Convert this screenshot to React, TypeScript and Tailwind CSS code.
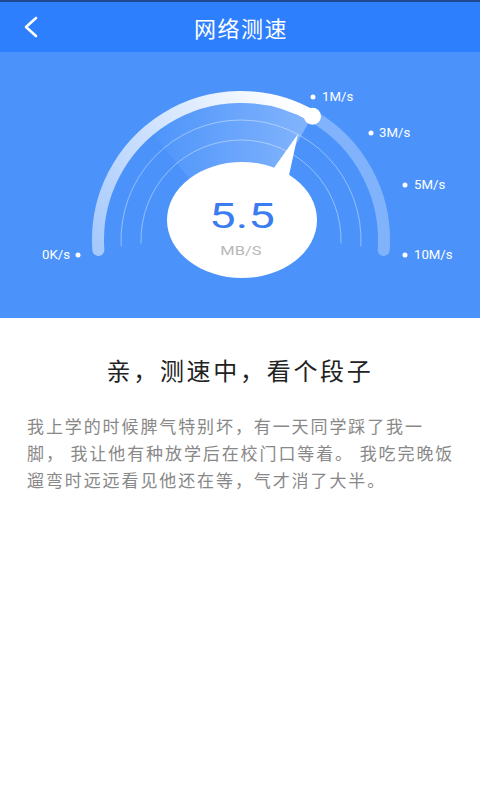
import React from 'react';

const CX = 241;
const CY = 188;

function pt(deg: number, r: number) {
  const a = (deg * Math.PI) / 180;
  return [CX + r * Math.cos(a), CY - r * Math.sin(a)];
}

function arc(from: number, to: number, r: number) {
  const [x1, y1] = pt(from, r);
  const [x2, y2] = pt(to, r);
  const large = from - to > 180 ? 1 : 0;
  return `M ${x1} ${y1} A ${r} ${r} 0 ${large} 1 ${x2} ${y2}`;
}

const KNOB = 60;

const labels = [
  { text: '1M/s', dot: [313, 45], x: 322, y: 49, anchor: 'start' },
  { text: '3M/s', dot: [371, 81], x: 379, y: 85, anchor: 'start' },
  { text: '5M/s', dot: [405, 133], x: 414, y: 137, anchor: 'start' },
  { text: '10M/s', dot: [405, 203], x: 414, y: 207, anchor: 'start' },
  { text: '0K/s', dot: [78, 203], x: 70, y: 207, anchor: 'end' },
];

function Gauge() {
  const [kx, ky] = pt(KNOB, 143);
  const [sx1, sy1] = pt(130, 137);
  const [sx2, sy2] = pt(KNOB, 137);

  return (
    <svg width="480" height="266" viewBox="0 0 480 266" className="block">
      <defs>
        <linearGradient id="fan" gradientUnits="userSpaceOnUse" x1="145" y1="0" x2="305" y2="0">
          <stop offset="0" stopColor="#fff" stopOpacity="0" />
          <stop offset="1" stopColor="#fff" stopOpacity="0.3" />
        </linearGradient>
        <linearGradient id="done" gradientUnits="userSpaceOnUse" x1="98" y1="200" x2="300" y2="60">
          <stop offset="0" stopColor="#fff" stopOpacity="0.5" />
          <stop offset="1" stopColor="#fff" stopOpacity="1" />
        </linearGradient>
      </defs>

      {/* progress fan */}
      <path d={`M ${CX} ${CY} L ${sx1} ${sy1} A 137 137 0 0 1 ${sx2} ${sy2} Z`} fill="url(#fan)" />

      {/* inner rings */}
      <path d={arc(183, -3, 120)} fill="none" stroke="#fff" strokeOpacity="0.4" strokeWidth="1" />
      <path d={arc(182, -2, 100)} fill="none" stroke="#fff" strokeOpacity="0.4" strokeWidth="1" />

      {/* outer track */}
      <path d={arc(KNOB, -4, 143)} fill="none" stroke="#fff" strokeOpacity="0.3" strokeWidth="12" strokeLinecap="round" />
      <path d={arc(184, KNOB, 143)} fill="none" stroke="url(#done)" strokeWidth="12" strokeLinecap="round" />
      <circle cx={kx} cy={ky} r="8.5" fill="#fff" />

      {/* bubble with tail */}
      <polygon points="264,130 298,82 288,128" fill="#fff" />
      <ellipse cx="242" cy="168" rx="75" ry="58" fill="#fff" />
      <text
        transform="translate(242 175.5) scale(1.32 1)"
        textAnchor="middle"
        fontSize="36"
        fill="#3b7df0"
        fontFamily="Roboto, 'Liberation Sans', sans-serif"
      >
        5.5
      </text>
      <text
        transform="translate(241 203) scale(1.32 1)"
        textAnchor="middle"
        fontSize="12.5"
        fill="#b8b8b8"
        fontFamily="Roboto, 'Liberation Sans', sans-serif"
      >
        MB/S
      </text>

      {labels.map((l) => (
        <g key={l.text}>
          <circle cx={l.dot[0]} cy={l.dot[1]} r="2.5" fill="#fff" />
          <text
            transform={`translate(${l.x} ${l.y}) scale(1.1 1)`}
            textAnchor={l.anchor as 'start' | 'end'}
            fontSize="12"
            fill="#fff"
            fontFamily="Roboto, 'Liberation Sans', sans-serif"
          >
            {l.text}
          </text>
        </g>
      ))}
    </svg>
  );
}

export default function App() {
  return (
    <div className="w-[480px] h-[800px] bg-white overflow-hidden font-['Noto_Sans_CJK_SC','Noto_Sans',sans-serif]">
      <div className="h-[2px] bg-[#1d4a8f]" />
      <header className="relative h-[50px] bg-[#2d7ffe] flex items-center justify-center">
        <button className="absolute left-[18px] top-1/2 -translate-y-1/2 p-1 text-white">
          <svg width="18" height="22" viewBox="0 0 18 22">
            <path d="M14 2 L4 11 L14 20" fill="none" stroke="#fff" strokeWidth="2.6" strokeLinecap="round" strokeLinejoin="round" />
          </svg>
        </button>
        <h1 className="text-white text-[22px] tracking-[1.5px] pl-[2px]">网络测速</h1>
      </header>

      <section className="h-[266px] bg-[#4b93fb]">
        <Gauge />
      </section>

      <div className="pt-[36px] text-center text-[24px] tracking-[2.7px] text-[#222222] leading-[32px]">
        亲，测速中，看个段子
      </div>

      <div className="mt-[26px] pl-[27px] text-[17px] leading-[27px] tracking-[1.9px] text-[#888888] whitespace-pre">
        <p>我上学的时候脾气特别坏，有一天同学踩了我一</p>
        <p>脚， 我让他有种放学后在校门口等着。 我吃完晚饭</p>
        <p>遛弯时远远看见他还在等，气才消了大半。</p>
      </div>
    </div>
  );
}
